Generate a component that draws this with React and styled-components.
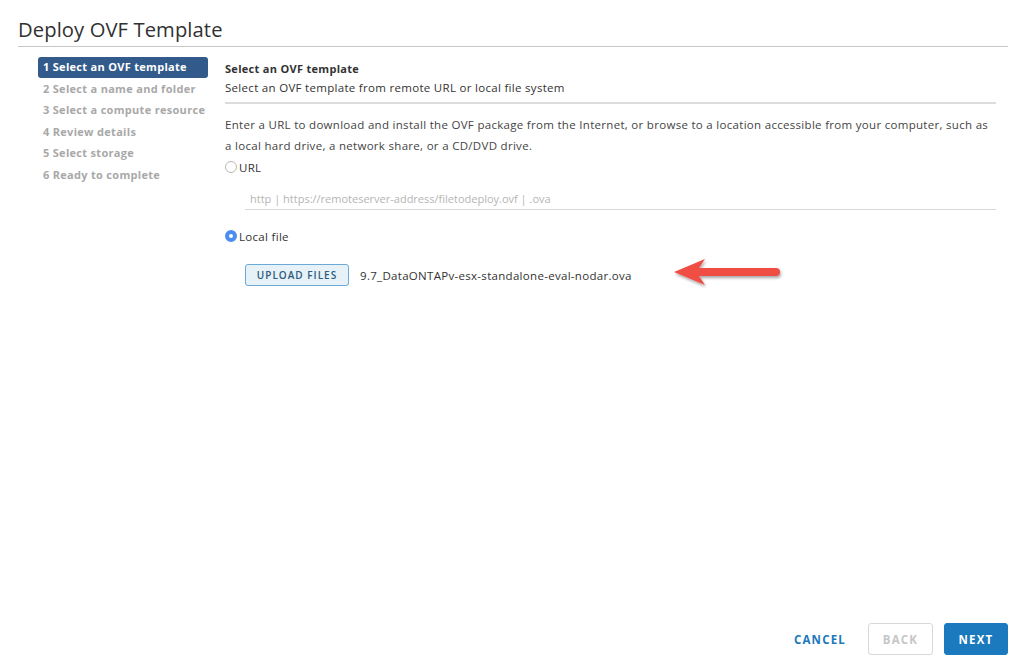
import styled, { createGlobalStyle } from "styled-components";

const GlobalStyle = createGlobalStyle`
  html, body {
    margin: 0;
    padding: 0;
    background: #fff;
  }
  body {
    font-family: "Open Sans", "Liberation Sans", sans-serif;
    color: #333;
  }
`;

const Page = styled.div`
  height: 672px;
  display: flex;
  flex-direction: column;
  padding: 0 16px 0 18px;
  box-sizing: border-box;
`;

const Titulo = styled.h1`
  margin: 0;
  padding: 15px 0 3px;
  font-size: 20.2px;
  font-weight: 400;
  color: #313131;
  letter-spacing: 0.1px;
  border-bottom: 1px solid #c8c8c8;
`;

const Corpo = styled.div`
  flex: 1;
  display: flex;
  padding-top: 10px;
`;

const Menu = styled.nav`
  width: 170px;
  margin-left: 20px;
  display: flex;
  flex-direction: column;
  gap: 1px;
`;

const Passo = styled.div`
  height: 20.5px;
  line-height: 20.5px;
  padding-left: 5px;
  font-size: 11px;
  font-weight: 700;
  letter-spacing: 0.3px;
  border-radius: 3px;
  white-space: nowrap;
  color: ${(p) => (p.$ativo ? "#fff" : "#a8a8a8")};
  background: ${(p) => (p.$ativo ? "#325a8a" : "transparent")};
`;

const Conteudo = styled.div`
  flex: 1;
  margin-left: 17px;
  margin-right: 12px;
  display: flex;
  flex-direction: column;
`;

const Cabecalho = styled.div`
  padding-top: 2px;
  padding-bottom: 5px;
  border-bottom: 2px solid #dcdcdc;
`;

const Subtitulo = styled.div`
  font-size: 11px;
  font-weight: 700;
  letter-spacing: 0.3px;
  line-height: 19px;
  color: #333;
`;

const Descricao = styled.div`
  font-size: 11.5px;
  letter-spacing: 0.3px;
  line-height: 19px;
  color: #333;
`;

const Texto = styled.p`
  margin: 10px 0 0;
  font-size: 11.5px;
  letter-spacing: 0.3px;
  line-height: 21px;
  color: #444;
`;

const Opcao = styled.label`
  display: flex;
  align-items: center;
  gap: 2px;
  font-size: 11.5px;
  letter-spacing: 0.3px;
  color: #333;
  height: 20px;
  margin-top: ${(p) => p.$topo || 0}px;
`;

const Radio = styled.span`
  width: 12px;
  height: 12px;
  border-radius: 50%;
  box-sizing: border-box;
  border: ${(p) => (p.$marcado ? "4px solid #4a8ef2" : "1px solid #b8b8b8")};
  background: #fff;
`;

const CampoUrl = styled.div`
  margin: 10px 0 0 20px;
  padding: 4px 5px 3px;
  border-bottom: 1px solid #d8d8d8;
  font-size: 11px;
  color: #b5b5b5;
`;

const LinhaArquivo = styled.div`
  display: flex;
  align-items: center;
  margin: 13px 0 0 20px;
`;

const BotaoUpload = styled.button`
  height: 22px;
  width: 104px;
  padding: 0;
  border: 1px solid #6aa9d8;
  border-radius: 3px;
  background: #e6f1f8;
  color: #2c5b7d;
  font-family: inherit;
  font-size: 10px;
  font-weight: 600;
  letter-spacing: 1px;
`;

const NomeArquivo = styled.span`
  margin-left: 11px;
  font-size: 11.5px;
  letter-spacing: 0.3px;
  color: #333;
`;

const Seta = styled.svg`
  margin-left: 41px;
  margin-top: -2px;
  overflow: visible;
`;

const Rodape = styled.div`
  display: flex;
  justify-content: flex-end;
  align-items: center;
  gap: 11px;
  padding-bottom: 17px;
`;

const Botao = styled.button`
  height: 32px;
  width: ${(p) => p.$largura}px;
  box-sizing: border-box;
  padding: 0;
  margin-right: ${(p) => p.$margem || 0}px;
  border-radius: 3px;
  font-family: inherit;
  font-size: 11.5px;
  font-weight: 700;
  letter-spacing: 1.2px;
  border: 1px solid
    ${(p) => (p.$tipo === "primario" ? "#1b79bd" : p.$tipo === "desativado" ? "#d8d8d8" : "transparent")};
  background: ${(p) => (p.$tipo === "primario" ? "#1b79bd" : "#fff")};
  color: ${(p) =>
    p.$tipo === "primario" ? "#fff" : p.$tipo === "desativado" ? "#c6c6c6" : "#1b79bd"};
`;

const passos = [
  "1 Select an OVF template",
  "2 Select a name and folder",
  "3 Select a compute resource",
  "4 Review details",
  "5 Select storage",
  "6 Ready to complete",
];

function App() {
  return (
    <>
      <GlobalStyle />
      <Page>
        <Titulo>Deploy OVF Template</Titulo>
        <Corpo>
          <Menu>
            {passos.map((p, i) => (
              <Passo key={p} $ativo={i === 0}>
                {p}
              </Passo>
            ))}
          </Menu>
          <Conteudo>
            <Cabecalho>
              <Subtitulo>Select an OVF template</Subtitulo>
              <Descricao>Select an OVF template from remote URL or local file system</Descricao>
            </Cabecalho>
            <Texto>
              Enter a URL to download and install the OVF package from the Internet, or browse to a
              location accessible from your computer, such as a local hard drive, a network share, or
              a CD/DVD drive.
            </Texto>
            <Opcao $topo={1}>
              <Radio />
              URL
            </Opcao>
            <CampoUrl>http | https://remoteserver-address/filetodeploy.ovf | .ova</CampoUrl>
            <Opcao $topo={16}>
              <Radio $marcado />
              Local file
            </Opcao>
            <LinhaArquivo>
              <BotaoUpload>UPLOAD FILES</BotaoUpload>
              <NomeArquivo>9.7_DataONTAPv-esx-standalone-eval-nodar.ova</NomeArquivo>
              <Seta width="108" height="34" viewBox="0 0 108 34">
                <defs>
                  <filter id="sombra" x="-20%" y="-40%" width="140%" height="180%">
                    <feDropShadow dx="1" dy="2" stdDeviation="1.5" floodColor="#000" floodOpacity="0.35" />
                  </filter>
                </defs>
                <g filter="url(#sombra)">
                  <path d="M1 15 L32 2 L26 11 L103 11 A4 4 0 0 1 103 19 L26 19 L32 28 Z" fill="#f04e45" />
                </g>
              </Seta>
            </LinhaArquivo>
            <div style={{ flex: 1 }} />
          </Conteudo>
        </Corpo>
        <Rodape>
          <Botao $tipo="link" $largura={76} $margem={-1}>CANCEL</Botao>
          <Botao $tipo="desativado" $largura={65}>BACK</Botao>
          <Botao $tipo="primario" $largura={64}>NEXT</Botao>
        </Rodape>
      </Page>
    </>
  );
}

export default App;
